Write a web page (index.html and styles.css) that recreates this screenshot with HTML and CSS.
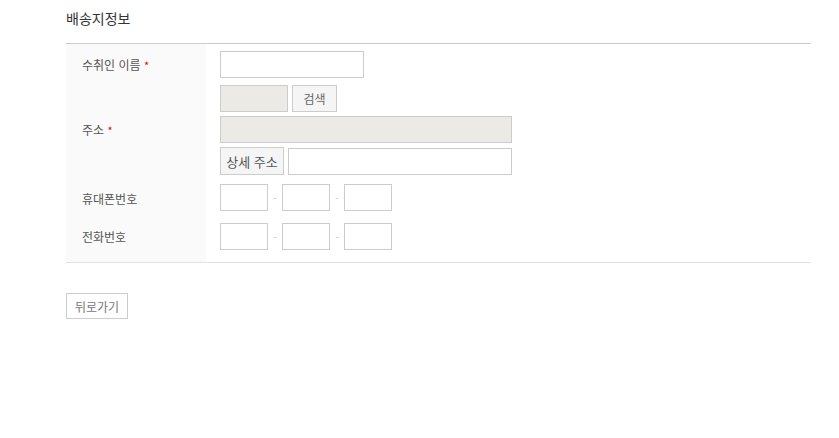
FILE: index.html
```html
<!DOCTYPE html>
<html lang="ko">
<head>
    <meta charset="UTF-8">
    <meta name="viewport" content="width=device-width, initial-scale=1.0">
    <title>배송지정보</title>
    <link rel="stylesheet" href="styles.css">
</head>
<body>
    <div class="wrap">
        <h2 class="title">배송지정보</h2>
        <table class="form-table">
            <tbody>
                <tr class="row-name">
                    <th>수취인 이름 <span class="req">*</span></th>
                    <td><input type="text" class="inp inp-name"></td>
                </tr>
                <tr class="row-addr">
                    <th class="th-up">주소 <span class="req">*</span></th>
                    <td>
                        <div class="line">
                            <input type="text" class="inp inp-zip" readonly>
                            <button class="btn">검색</button>
                        </div>
                        <div class="line">
                            <input type="text" class="inp inp-addr" readonly>
                        </div>
                        <div class="line">
                            <button class="btn btn-detail">상세 주소</button>
                            <input type="text" class="inp inp-detail">
                        </div>
                    </td>
                </tr>
                <tr class="row-phone">
                    <th>휴대폰번호</th>
                    <td>
                        <div class="line">
                            <input type="text" class="inp inp-num">
                            <span class="dash">-</span>
                            <input type="text" class="inp inp-num">
                            <span class="dash">-</span>
                            <input type="text" class="inp inp-num">
                        </div>
                    </td>
                </tr>
                <tr class="row-tel">
                    <th class="th-up">전화번호</th>
                    <td>
                        <div class="line">
                            <input type="text" class="inp inp-num">
                            <span class="dash">-</span>
                            <input type="text" class="inp inp-num">
                            <span class="dash">-</span>
                            <input type="text" class="inp inp-num">
                        </div>
                    </td>
                </tr>
            </tbody>
        </table>
        <div class="actions">
            <button class="btn-back">뒤로가기</button>
        </div>
    </div>
</body>
</html>
```

FILE: styles.css
```css
body {
    margin: 0;
    padding: 0;
    background: #fff;
    font-family: "Noto Sans CJK KR", "Noto Sans", sans-serif;
    font-size: 12px;
    color: #555;
}
.wrap {
    margin-left: 66px;
    width: 745px;
}
.title {
    margin: 0;
    padding-top: 8px;
    height: 43px;
    box-sizing: border-box;
    font-size: 14px;
    font-weight: normal;
    line-height: 20px;
    color: #333;
}
.form-table {
    width: 100%;
    border-collapse: collapse;
    border-top: 1px solid #ccc;
    border-bottom: 1px solid #e3e3e3;
}
.form-table th {
    width: 124px;
    padding: 0 0 0 16px;
    background: #fafafa;
    font-weight: normal;
    text-align: left;
    vertical-align: middle;
    color: #555;
}
.form-table th.th-up {
    padding-bottom: 6px;
}
.form-table td {
    padding: 0 0 0 14px;
}
.row-name td {
    padding-top: 7px;
    padding-bottom: 7px;
}
.row-addr td {
    padding-bottom: 4px;
}
.row-phone td {
    padding-top: 5px;
    padding-bottom: 6px;
}
.row-tel td {
    padding-top: 6px;
    padding-bottom: 12px;
}
.req {
    color: #e00;
    font-size: 11px;
}
.line {
    display: flex;
    align-items: center;
}
.line + .line {
    margin-top: 4px;
}
.inp {
    box-sizing: border-box;
    height: 27px;
    margin: 0;
    padding: 0 4px;
    border: 1px solid #ccc;
    background: #fff;
    font-family: inherit;
    font-size: 12px;
    outline: none;
}
.inp[readonly] {
    background: #ebeae4;
}
.inp-name {
    width: 144px;
}
.inp-zip {
    width: 68px;
}
.inp-addr {
    width: 292px;
}
.inp-detail {
    width: 224px;
    margin-left: 4px;
}
.inp-num {
    width: 48px;
}
.dash {
    width: 14px;
    text-align: center;
    color: #ccc;
    font-size: 11px;
}
.btn {
    box-sizing: border-box;
    height: 27px;
    width: 45px;
    margin: 0 0 0 4px;
    padding: 0;
    border: 1px solid #ccc;
    background: #f5f5f5;
    color: #666;
    font-family: inherit;
    font-size: 12px;
    cursor: pointer;
}
.btn-detail {
    width: 64px;
    height: 28px;
    margin: 0;
    color: #555;
    font-size: 13px;
}
.actions {
    display: flex;
    margin-top: 30px;
}
.btn-back {
    box-sizing: border-box;
    width: 62px;
    height: 26px;
    padding: 0;
    border: 1px solid #ccc;
    background: #fff;
    color: #777;
    font-family: inherit;
    font-size: 12px;
    cursor: pointer;
}
```
